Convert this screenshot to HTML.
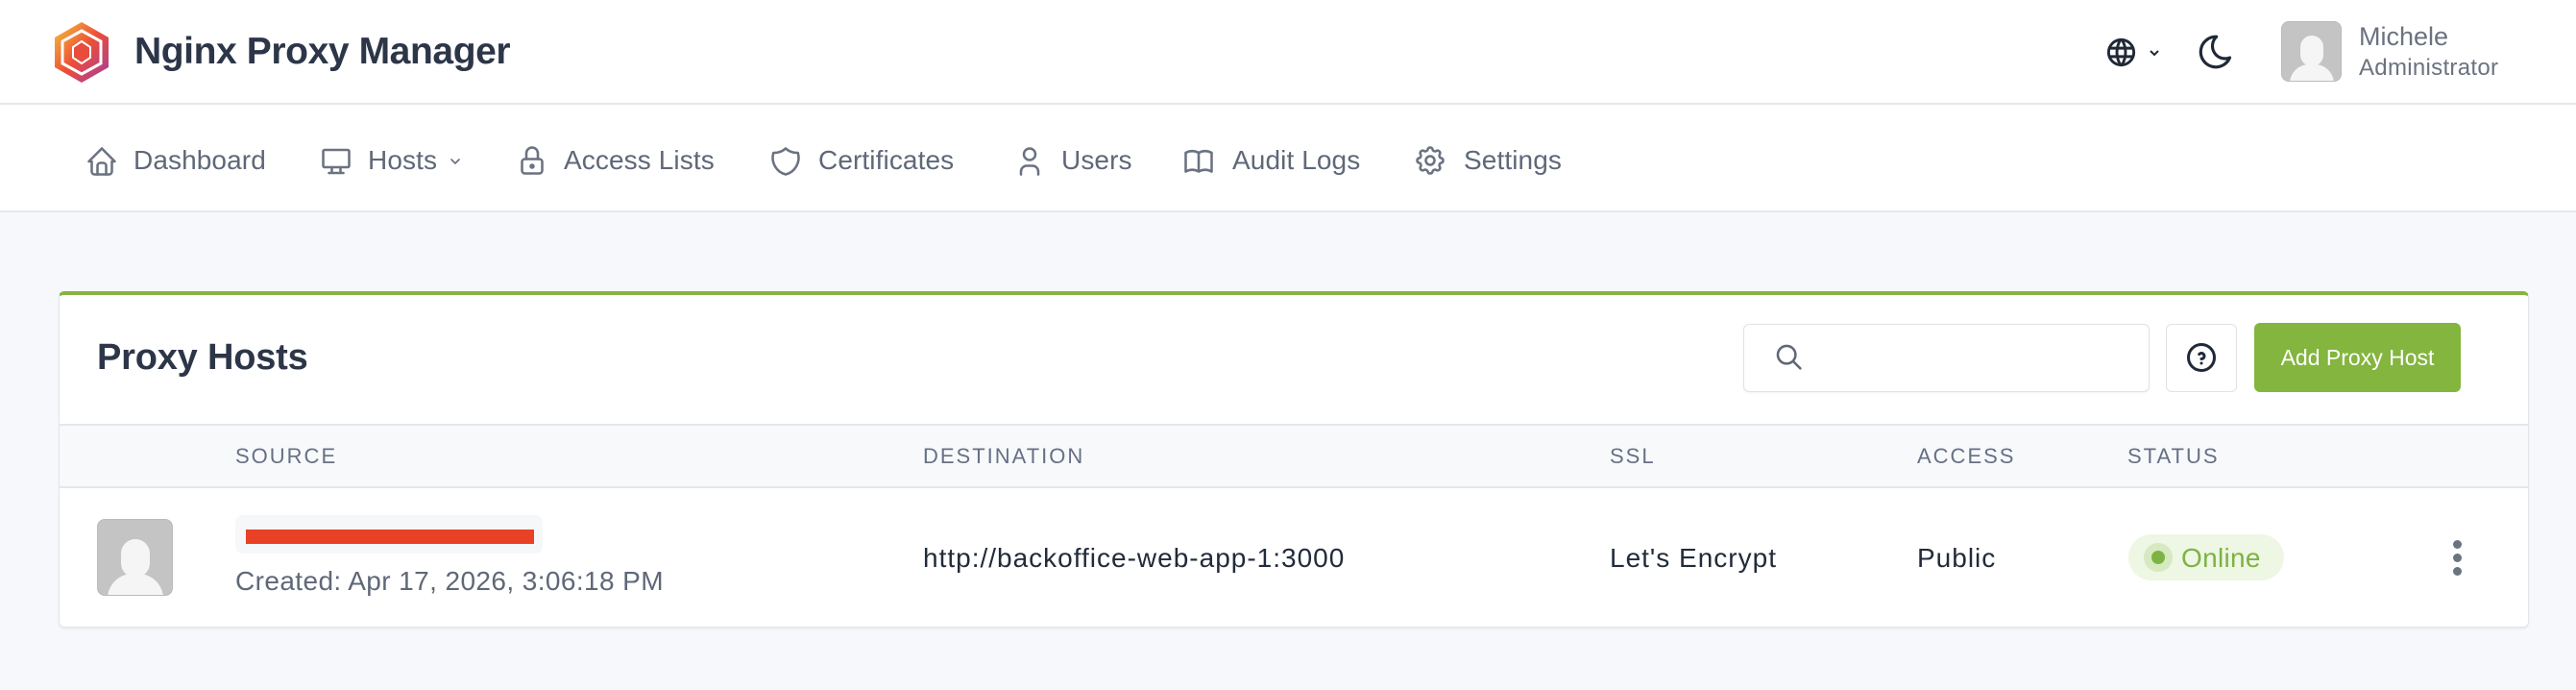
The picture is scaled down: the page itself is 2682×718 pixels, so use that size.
<!DOCTYPE html>
<html><head><meta charset="utf-8"><style>
*{margin:0;padding:0;box-sizing:border-box}
body{width:2682px;height:718px;background:#f6f8fb;font-family:"Liberation Sans",sans-serif;position:relative;overflow:hidden}
.a{position:absolute;white-space:nowrap}
.hdr{left:0;top:0;width:2682px;height:109px;background:#fff;border-bottom:2px solid #e6e7ec}
.nav{left:0;top:109px;width:2682px;height:112px;background:#fff;border-bottom:2px solid #e6e7ec}
.ni{font-size:28px;color:#5f6878;top:151px;line-height:32px;letter-spacing:.1px}
svg.ic{position:absolute;fill:none;stroke:#6b7280;stroke-width:1.7;stroke-linecap:round;stroke-linejoin:round}
.th{font-size:22px;color:#667085;letter-spacing:2px;top:462px}
.td{font-size:28px;color:#222b3a;top:565px;letter-spacing:1px}
</style></head><body>
<div class="a hdr"></div>
<div class="a nav"></div>
<svg class="a" style="left:56px;top:23px" width="58" height="63" viewBox="0 0 58 63">
<defs><linearGradient id="g" x1="0" y1="0" x2="1" y2="1"><stop offset="0" stop-color="#f6c33b"/><stop offset=".5" stop-color="#ec4e38"/><stop offset="1" stop-color="#a23ca4"/></linearGradient></defs>
<polygon points="29,0 57,16 57,47 29,63 1,47 1,16" fill="url(#g)"/>
<polygon points="29,9 49,20 49,43 29,54 9,43 9,20" fill="none" stroke="#fff" stroke-width="3"/>
<polygon points="29,20 38,26 38,37 29,43 20,37 20,26" fill="#e84c3d" stroke="#fff" stroke-width="2"/>
</svg>
<div class="a" style="left:140px;top:32px;font-size:39px;font-weight:bold;color:#2d3648;letter-spacing:-.4px">Nginx Proxy Manager</div>
<svg class="a" style="left:2191px;top:37px" width="35" height="35" viewBox="0 0 24 24" fill="none" stroke="#1f2937" stroke-width="2" stroke-linecap="round"><circle cx="12" cy="12" r="9"/><path d="M3.6 9h16.8M3.6 15h16.8M11.5 3a17 17 0 0 0 0 18M12.5 3a17 17 0 0 1 0 18"/></svg>
<svg class="a" style="left:2237px;top:50px" width="12" height="10" viewBox="0 0 12 10" fill="none" stroke="#1f2937" stroke-width="2"><path d="M2 3l4 4 4-4"/></svg>
<svg class="a" style="left:2286px;top:33px" width="42" height="42" viewBox="0 0 24 24" fill="none" stroke="#1f2937" stroke-width="1.8" stroke-linecap="round" stroke-linejoin="round"><path d="M12 3c.132 0 .263 0 .393 0a7.5 7.5 0 0 0 7.92 12.446a9 9 0 1 1 -8.313 -12.454z"/></svg>
<div class="a" style="left:2375px;top:22px;width:63px;height:63px;border-radius:8px;background:#c4c4c4;overflow:hidden;border:1px solid #bbb">
<div class="a" style="left:19px;top:14px;width:24px;height:32px;border-radius:12px;background:#f5f5f5"></div>
<div class="a" style="left:8px;top:44px;width:46px;height:30px;border-radius:20px 20px 0 0;background:#f5f5f5"></div></div>
<div class="a" style="left:2456px;top:23px;font-size:27px;color:#6b7280">Michele</div>
<div class="a" style="left:2456px;top:57px;font-size:24px;color:#6b7280;letter-spacing:.3px">Administrator</div>
<svg class="ic" style="left:88px;top:150px" width="36" height="36" viewBox="0 0 24 24"><path d="M5 12H3l9-9 9 9h-2M5 12v7a2 2 0 0 0 2 2h10a2 2 0 0 0 2-2v-7"/><path d="M9 21v-6a2 2 0 0 1 2-2h2a2 2 0 0 1 2 2v6"/></svg>
<div class="a ni" style="left:139px">Dashboard</div>
<svg class="ic" style="left:332px;top:150px" width="36" height="36" viewBox="0 0 24 24"><rect x="3" y="4" width="18" height="12" rx="1"/><path d="M7 20h10M9 16v4M15 16v4"/></svg>
<div class="a ni" style="left:383px">Hosts</div>
<svg class="ic" style="left:467px;top:162px" width="14" height="12" viewBox="0 0 14 12"><path d="M3 4l4 4 4-4"/></svg>
<svg class="ic" style="left:536px;top:148px" width="36" height="38" viewBox="0 0 24 24"><rect x="5" y="11" width="14" height="10" rx="2"/><circle cx="12" cy="16" r="1"/><path d="M8 11V7a4 4 0 0 1 8 0v4"/></svg>
<div class="a ni" style="left:587px">Access Lists</div>
<svg class="ic" style="left:800px;top:150px" width="36" height="36" viewBox="0 0 24 24"><path d="M12 3a12 12 0 0 0 8.5 3A12 12 0 0 1 12 21 12 12 0 0 1 3.5 6 12 12 0 0 0 12 3"/></svg>
<div class="a ni" style="left:852px">Certificates</div>
<svg class="ic" style="left:1054px;top:150px" width="36" height="36" viewBox="0 0 24 24"><circle cx="12" cy="7" r="4"/><path d="M6 21v-2a4 4 0 0 1 4-4h4a4 4 0 0 1 4 4v2"/></svg>
<div class="a ni" style="left:1105px">Users</div>
<svg class="ic" style="left:1230px;top:150px" width="36" height="36" viewBox="0 0 24 24"><path d="M3 19a9 9 0 0 1 9 0 9 9 0 0 1 9 0M3 6a9 9 0 0 1 9 0 9 9 0 0 1 9 0M3 6v13M12 6v13M21 6v13"/></svg>
<div class="a ni" style="left:1283px">Audit Logs</div>
<svg class="ic" style="left:1471px;top:149px" width="36" height="36" viewBox="0 0 24 24"><path d="M10.325 4.317c.426-1.756 2.924-1.756 3.35 0a1.724 1.724 0 0 0 2.573 1.066c1.543-.94 3.31.826 2.37 2.37a1.724 1.724 0 0 0 1.065 2.572c1.756.426 1.756 2.924 0 3.35a1.724 1.724 0 0 0-1.066 2.573c.94 1.543-.826 3.31-2.37 2.37a1.724 1.724 0 0 0-2.572 1.065c-.426 1.756-2.924 1.756-3.35 0a1.724 1.724 0 0 0-2.573-1.066c-1.543.94-3.31-.826-2.37-2.37a1.724 1.724 0 0 0-1.065-2.572c-1.756-.426-1.756-2.924 0-3.35a1.724 1.724 0 0 0 1.066-2.573c-.94-1.543.826-3.31 2.37-2.37 1 .608 2.296.07 2.572-1.065z"/><circle cx="12" cy="12" r="3"/></svg>
<div class="a ni" style="left:1524px">Settings</div>
<div class="a" style="left:61px;top:303px;width:2572px;height:350px;background:#fff;border:1px solid #e3e5ea;border-top:4px solid #84b53f;border-radius:6px;box-shadow:0 2px 2px rgba(0,0,0,.05)"></div>
<div class="a" style="left:101px;top:351px;font-size:38px;font-weight:bold;color:#2d3648;letter-spacing:-.2px">Proxy Hosts</div>
<div class="a" style="left:1815px;top:337px;width:423px;height:71px;border:1.5px solid #dfe2e7;border-radius:6px;background:#fff;box-shadow:0 1px 2px rgba(0,0,0,.05)"></div>
<svg class="a" style="left:1846px;top:355px" width="34" height="34" viewBox="0 0 24 24" fill="none" stroke="#5f6878" stroke-width="1.8" stroke-linecap="round"><circle cx="10" cy="10" r="6.5"/><path d="M15 15l5 5"/></svg>
<div class="a" style="left:2255px;top:337px;width:74px;height:71px;border:1.5px solid #dfe2e7;border-radius:6px;background:#fff"></div>
<svg class="a" style="left:2274px;top:354px" width="36" height="36" viewBox="0 0 24 24" fill="none" stroke="#1f2937" stroke-width="2" stroke-linecap="round"><circle cx="12" cy="12" r="9"/><path d="M12 16v.01M12 13a2 2 0 0 0 .914-3.782 1.98 1.98 0 0 0-2.414.483"/></svg>
<div class="a" style="left:2347px;top:336px;width:215px;height:72px;background:#84b53f;border-radius:6px;color:#fff;font-size:23px;line-height:72px;text-align:center">Add Proxy Host</div>
<div class="a" style="left:62px;top:441px;width:2570px;height:67px;background:#f8f9fb;border-top:2px solid #e6e7ec;border-bottom:2px solid #e6e7ec"></div>
<div class="a th" style="left:245px">SOURCE</div>
<div class="a th" style="left:961px">DESTINATION</div>
<div class="a th" style="left:1676px">SSL</div>
<div class="a th" style="left:1996px">ACCESS</div>
<div class="a th" style="left:2215px">STATUS</div>
<div class="a" style="left:101px;top:540px;width:79px;height:80px;border-radius:8px;background:#c4c4c4;overflow:hidden;border:1px solid #bbb">
<div class="a" style="left:24px;top:20px;width:30px;height:40px;border-radius:15px;background:#f5f5f5"></div>
<div class="a" style="left:10px;top:56px;width:58px;height:40px;border-radius:26px 26px 0 0;background:#f5f5f5"></div></div>
<div class="a" style="left:245px;top:536px;width:320px;height:40px;background:#f6f7f9;border-radius:8px"></div>
<div class="a" style="left:256px;top:551px;width:300px;height:15px;background:#e84126"></div>
<div class="a" style="left:245px;top:589px;font-size:28px;color:#5f6878;letter-spacing:.4px">Created: Apr 17, 2026, 3:06:18 PM</div>
<div class="a td" style="left:961px">http://backoffice-web-app-1:3000</div>
<div class="a td" style="left:1676px">Let's Encrypt</div>
<div class="a td" style="left:1996px">Public</div>
<div class="a" style="left:2216px;top:556px;width:162px;height:48px;border-radius:24px;background:#eef6e4"></div>
<div class="a" style="left:2232px;top:565px;width:30px;height:30px;border-radius:50%;background:#d7e9c0"></div>
<div class="a" style="left:2240px;top:573px;width:14px;height:14px;border-radius:50%;background:#7cb342"></div>
<div class="a" style="left:2271px;top:565px;font-size:28px;color:#7cb342;letter-spacing:.3px">Online</div>
<div class="a" style="left:2554px;top:562px;width:9px;height:9px;border-radius:50%;background:#6b7280"></div>
<div class="a" style="left:2554px;top:576px;width:9px;height:9px;border-radius:50%;background:#6b7280"></div>
<div class="a" style="left:2554px;top:590px;width:9px;height:9px;border-radius:50%;background:#6b7280"></div>
</body></html>
